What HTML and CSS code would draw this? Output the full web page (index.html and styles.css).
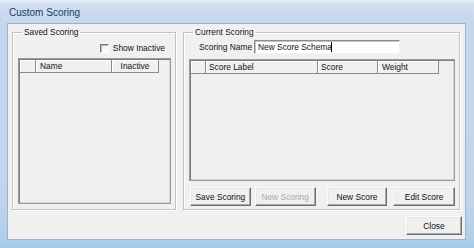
FILE: index.html
```html
<!DOCTYPE html>
<html>
<head>
<meta charset="utf-8">
<title>Custom Scoring</title>
<link rel="stylesheet" href="styles.css">
</head>
<body>
<div class="window">
  <div class="titlebar"><span class="title">Custom Scoring</span></div>
  <div class="client">
    <div class="groups">
      <fieldset class="group saved">
        <legend>Saved Scoring</legend>
        <div class="check-row"><span class="checkbox"></span><span class="check-label">Show Inactive</span></div>
        <div class="list saved-list">
          <div class="header">
            <div class="hcell c-row"></div>
            <div class="hcell c-name">Name</div>
            <div class="hcell c-inactive">Inactive</div>
          </div>
        </div>
      </fieldset>
      <fieldset class="group current">
        <legend>Current Scoring</legend>
        <div class="name-row">
          <label class="name-label">Scoring Name</label>
          <div class="textbox">New Score Schema<span class="caret"></span></div>
        </div>
        <div class="list current-list">
          <div class="header">
            <div class="hcell c-row2"></div>
            <div class="hcell c-label">Score Label</div>
            <div class="hcell c-score">Score</div>
            <div class="hcell c-weight">Weight</div>
          </div>
        </div>
        <div class="buttons">
          <button class="btn b-save">Save Scoring</button>
          <button class="btn b-newscoring" disabled>New Scoring</button>
          <button class="btn b-newscore">New Score</button>
          <button class="btn b-edit">Edit Score</button>
        </div>
      </fieldset>
    </div>
    <div class="footer"><button class="btn b-close">Close</button></div>
  </div>
</div>
</body>
</html>
```

FILE: styles.css
```css
* { box-sizing: border-box; }
html, body { margin: 0; padding: 0; }
body {
  width: 474px;
  height: 248px;
  overflow: hidden;
  font-family: "Liberation Sans", Arial, sans-serif;
  font-size: 8.4px;
  color: #111;
  background: #bdd3ec;
}
.window {
  width: 474px;
  height: 248px;
  display: flex;
  flex-direction: column;
  padding: 0 8px 8px 7px;
  background: linear-gradient(180deg, #e4edf8 0px, #d0dff1 5px, #c4d7ee 22px, #c0d5ec 200px, #aecfe9 238px, #a6cbe7 248px);
}
.titlebar {
  height: 23px;
  display: flex;
  align-items: center;
  padding-left: 2px;
  padding-top: 1px;
}
.title {
  font-size: 10px;
  color: #1e395b;
}
.client {
  flex: 1;
  background: #f0f0f0;
  border: 1px solid #9bb3ce;
  display: flex;
  flex-direction: column;
}
.groups {
  display: flex;
  margin-top: 3px;
  margin-left: 4px;
  gap: 7px;
}
.group {
  margin: 0;
  min-width: 0;
  border: 1px solid #c2c2c2;
  box-shadow: inset 1px 1px 0 #fff, 1px 1px 0 #fff;
  display: flex;
  flex-direction: column;
}
.group legend {
  font-size: 8.4px;
  line-height: 10px;
  padding: 0 2px;
  margin-left: 4px;
}
.saved {
  width: 164px;
  padding: 0 4px 4px 5px;
}
.current {
  width: 277px;
  padding: 0 4px 3px 5px;
}
.check-row {
  height: 10px;
  margin: 6px 6px 5px 0;
  display: flex;
  align-items: center;
  justify-content: flex-end;
}
.checkbox {
  width: 9px;
  height: 9px;
  background: #f7f7f7;
  border-top: 1px solid #7a7a7a;
  border-left: 1px solid #7a7a7a;
  border-right: 1px solid #fff;
  border-bottom: 1px solid #fff;
  box-shadow: inset 1px 1px 0 #b5b5b5;
  margin-right: 4px;
}
.list {
  background: #f0f0f0;
  border: 1px solid #9a9a9a;
  box-shadow: inset 1px 1px 0 #7d7d7d, inset -1px -1px 0 #d6d6d6;
  padding: 1px;
}
.saved-list { height: 146px; }
.current-list { height: 122px; margin-top: 5px; }
.header {
  display: flex;
  height: 13px;
}
.hcell {
  height: 13px;
  line-height: 12px;
  border-right: 1px solid #8a8a8a;
  border-bottom: 1px solid #8a8a8a;
  box-shadow: inset 1px 1px 0 #fff;
  padding-left: 4px;
  white-space: nowrap;
}
.c-row { width: 16px; }
.c-name { width: 76px; }
.c-inactive { width: 47px; text-align: center; padding-left: 0; }
.c-row2 { width: 15px; }
.c-label { width: 112px; padding-left: 3px; }
.c-score { width: 60px; padding-left: 3px; }
.c-weight { width: 61px; padding-left: 4px; }
.name-row {
  display: flex;
  align-items: center;
  margin-top: 3px;
  padding-left: 10px;
  height: 14px;
}
.name-label {
  width: 55px;
}
.textbox {
  width: 146px;
  height: 14px;
  background: #fff;
  border-top: 1px solid #8c8c8c;
  border-left: 1px solid #8c8c8c;
  border-right: 1px solid #f4f4f4;
  border-bottom: 1px solid #f4f4f4;
  box-shadow: inset 1px 1px 0 #c4c4c4;
  padding-left: 3px;
  line-height: 12px;
  display: flex;
  align-items: center;
  white-space: nowrap;
}
.caret {
  display: inline-block;
  width: 1px;
  height: 10px;
  background: #000;
  margin-left: -1px;
}
.buttons {
  display: flex;
  margin-top: 6px;
  padding-left: 1px;
}
.btn {
  font-family: "Liberation Sans", Arial, sans-serif;
  font-size: 8.4px;
  color: #111;
  height: 19px;
  padding: 0;
  margin: 0;
  background: #f0f0f0;
  border-top: 1px solid #fcfcfc;
  border-left: 1px solid #fcfcfc;
  border-right: 1px solid #6e6e6e;
  border-bottom: 1px solid #6e6e6e;
  box-shadow: inset -1px -1px 0 #a8a8a8, inset 1px 1px 0 #e8e8e8;
}
.btn:disabled { color: #a9a9a9; }
.b-save { width: 61px; }
.b-newscoring { width: 61px; margin-left: 4px; }
.b-newscore { width: 61px; margin-left: 11px; }
.b-edit { width: 62px; margin-left: 6px; }
.footer {
  display: flex;
  justify-content: flex-end;
  margin-top: 6px;
  padding-right: 3px;
}
.b-close { width: 56px; }
```
